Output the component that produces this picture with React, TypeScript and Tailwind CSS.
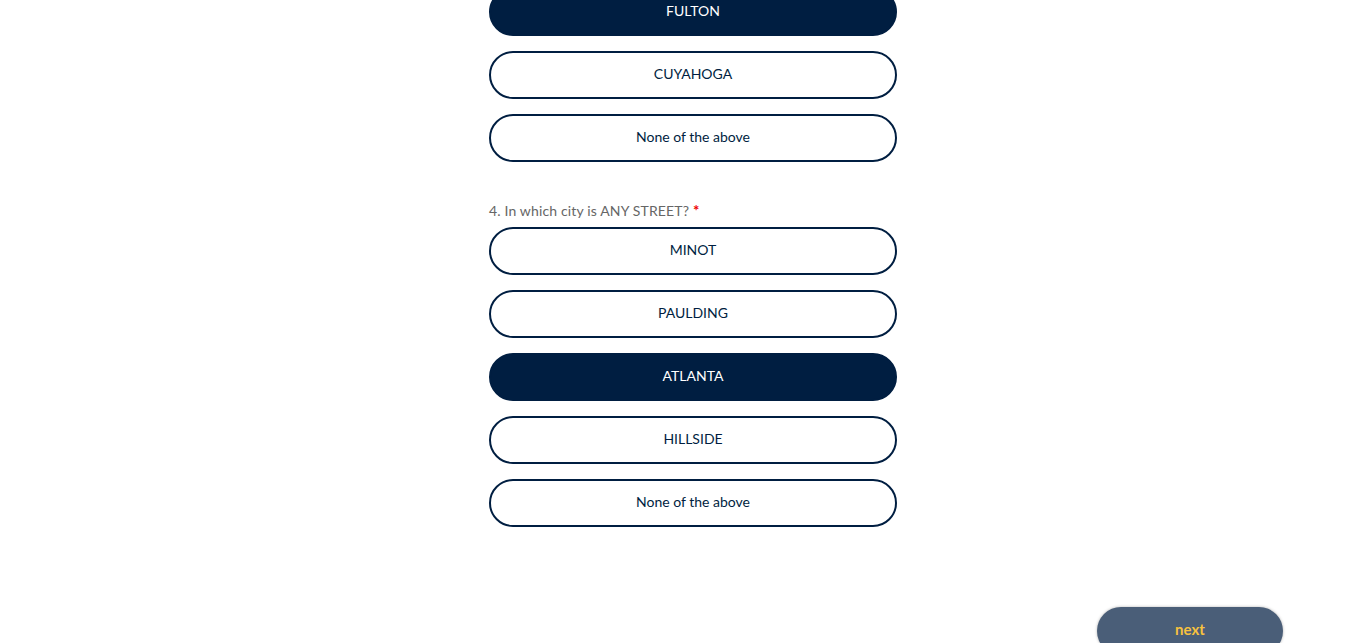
import React from "react";

type Option = { label: string; selected?: boolean };

const prevOptions: Option[] = [
  { label: "FULTON", selected: true },
  { label: "CUYAHOGA" },
  { label: "None of the above" },
];

const cityOptions: Option[] = [
  { label: "MINOT" },
  { label: "PAULDING" },
  { label: "ATLANTA", selected: true },
  { label: "HILLSIDE" },
  { label: "None of the above" },
];

function OptionButton({ label, selected }: Option) {
  return (
    <button
      className={
        selected
          ? "h-12 w-full rounded-full border-2 border-[#001e41] bg-[#001e41] pb-1 text-[14px] text-white"
          : "h-12 w-full rounded-full border-2 border-[#001e41] bg-white pb-1 text-[14px] text-[#001e41]"
      }
    >
      {label}
    </button>
  );
}

export default function App() {
  return (
    <div className="h-[643px] w-full overflow-hidden bg-white font-['Lato','Open_Sans',sans-serif]">
      <div className="flex justify-center pl-5">
        <div className="-mt-3 flex w-[408px] flex-col">
          <div className="flex flex-col gap-[15px]">
            {prevOptions.map((o) => (
              <OptionButton key={o.label} {...o} />
            ))}
          </div>
          <p className="mt-[39px] mb-[6px] h-5 text-[14px] leading-5 tracking-[0.15px] text-[#666]">
            4. In which city is ANY STREET?{" "}
            <span className="text-[15px] leading-none font-bold text-[#e00]">*</span>
          </p>
          <div className="flex flex-col gap-[15px]">
            {cityOptions.map((o) => (
              <OptionButton key={o.label} {...o} />
            ))}
          </div>
        </div>
      </div>
      <div className="mt-[80px] flex justify-end pr-[83px]">
        <button className="h-12 w-[186px] rounded-full bg-[#4a5e78] pb-1 text-[15px] font-bold text-[#f7c23e] shadow-[0_0_3px_rgba(0,0,0,0.3)]">
          next
        </button>
      </div>
    </div>
  );
}
